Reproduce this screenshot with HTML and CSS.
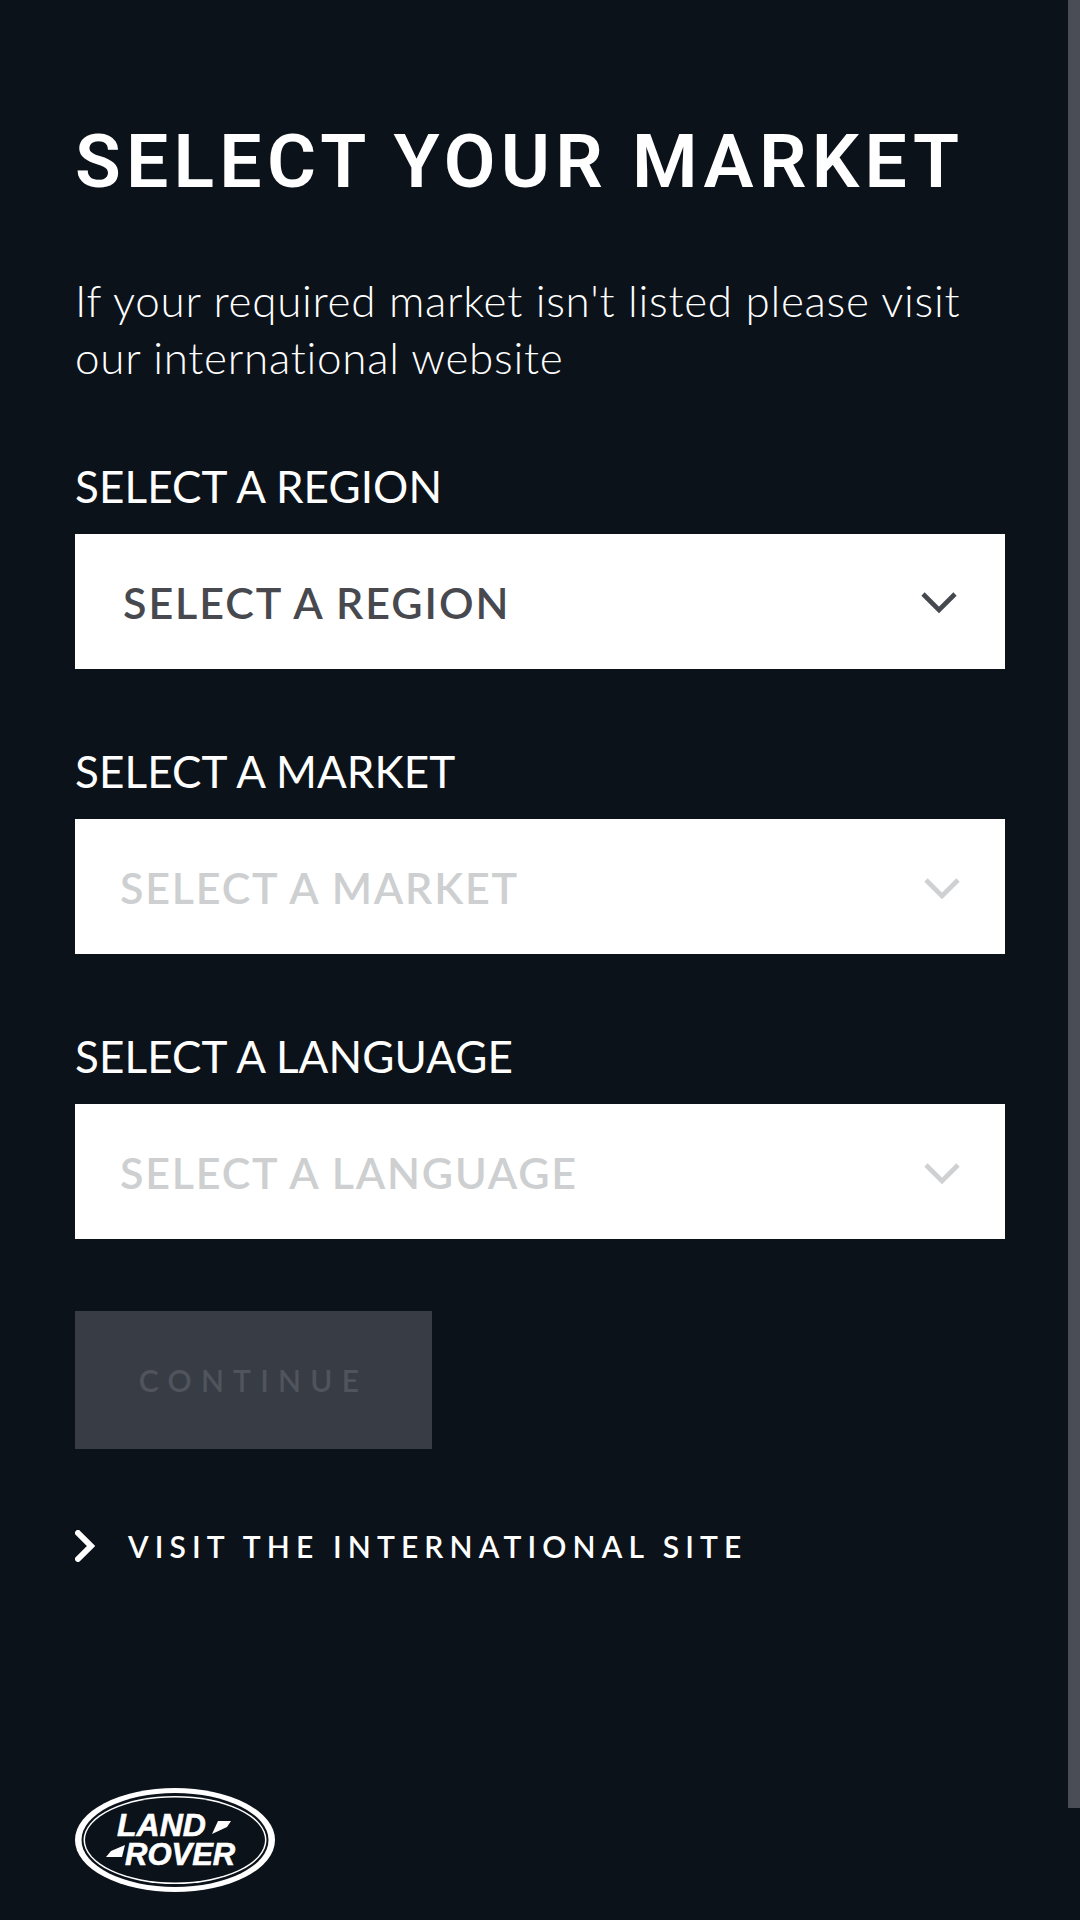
FILE: index.html
```html
<!DOCTYPE html>
<html lang="en">
<head>
<meta charset="utf-8">
<title>Select your market</title>
<link rel="stylesheet" href="styles.css">
</head>
<body>
<div class="page">
  <main class="content">
    <h1 class="title">SELECT YOUR MARKET</h1>
    <p class="intro">If your required market isn't listed please visit our international website</p>
    <div class="field">
      <label class="field-label">SELECT A REGION</label>
      <div class="select">
        <span class="select-text">SELECT A REGION</span>
        <svg class="chev" viewBox="0 0 36 22"><path d="M2 2 L18 18 L34 2" fill="none" stroke="#45484e" stroke-width="4.6"/></svg>
      </div>
    </div>
    <div class="field">
      <label class="field-label">SELECT A MARKET</label>
      <div class="select is-disabled">
        <span class="select-text">SELECT A MARKET</span>
        <svg class="chev" viewBox="0 0 36 22"><path d="M2 2 L18 18 L34 2" fill="none" stroke="#cfd0d2" stroke-width="4.6"/></svg>
      </div>
    </div>
    <div class="field">
      <label class="field-label">SELECT A LANGUAGE</label>
      <div class="select is-disabled">
        <span class="select-text">SELECT A LANGUAGE</span>
        <svg class="chev" viewBox="0 0 36 22"><path d="M2 2 L18 18 L34 2" fill="none" stroke="#cfd0d2" stroke-width="4.6"/></svg>
      </div>
    </div>
    <button class="continue" disabled>CONTINUE</button>
    <a class="visit" href="#">
      <svg class="visit-chev" viewBox="0 0 20 32"><path d="M3 3 L16 16 L3 29" fill="none" stroke="#fff" stroke-width="6" stroke-linecap="round"/></svg>
      <span>VISIT THE INTERNATIONAL SITE</span>
    </a>
    <svg class="logo" viewBox="0 0 200 104" role="img" aria-label="Land Rover">
      <ellipse cx="100" cy="52" rx="100" ry="52" fill="#fff"/>
      <ellipse cx="100" cy="52" rx="93.5" ry="47" fill="#0c121a"/>
      <ellipse cx="100" cy="52" rx="91.5" ry="44" fill="#fff"/>
      <ellipse cx="100" cy="52" rx="90" ry="42.5" fill="#0c121a"/>
      <text class="logo-text" x="42" y="48">LAND</text>
      <text class="logo-text logo-rover" x="50" y="77">ROVER</text>
      <polygon points="143,33 156,33 152,39 137,46" fill="#fff"/>
      <polygon points="50,57 36,63 31,69 47,69" fill="#fff"/>
    </svg>
  </main>
  <aside class="scrollbar"><div class="thumb"></div></aside>
</div>
</body>
</html>
```
FILE: styles.css
```css
* { box-sizing: border-box; }
html, body { margin: 0; padding: 0; height: 1920px; overflow: hidden; background: #0c121a; }
body { font-family: "Lato", "Liberation Sans", sans-serif; color: #fff; }
.page { display: flex; height: 1920px; }
.content { flex: 1; padding: 121px 63px 0 75px; display: flex; flex-direction: column; align-items: stretch; }
.title { margin: 0; font-family: "Roboto", "Liberation Sans", sans-serif; font-weight: 600; font-size: 75px; line-height: 80px; letter-spacing: 5.25px; white-space: nowrap; }
.intro { margin: 71px 0 0; font-size: 44px; font-weight: 300; line-height: 57px; letter-spacing: 0.72px; max-width: 900px; }
.field { display: flex; flex-direction: column; }
.intro + .field { margin-top: 75px; }
.field + .field { margin-top: 77px; }
.field-label { font-size: 44px; font-weight: 400; line-height: 50px; height: 50px; margin-bottom: 23px; letter-spacing: 0.1px; }
.select { height: 135px; background: #fff; display: flex; align-items: center; justify-content: space-between; padding: 2px 48px 0 48px; }
.select.is-disabled { padding: 2px 45px 0 45px; }
.select-text { font-size: 43px; font-weight: 600; color: #47494f; letter-spacing: 1.95px; }
.is-disabled .select-text { color: #cdcfd1; letter-spacing: 1.8px; }
.chev { width: 36px; height: 22px; display: block; }
.is-disabled .chev { margin-top: 2px; }
.continue { margin-top: 72px; width: 357px; height: 138px; border: 0; padding: 0; background: #383c45; color: #50545c; font-family: inherit; font-size: 30px; font-weight: 600; letter-spacing: 9.2px; }
.visit { margin-top: 79px; display: flex; align-items: center; gap: 33px; color: #fff; text-decoration: none; font-size: 30px; font-weight: 600; letter-spacing: 6.15px; line-height: 36px; }
.visit-chev { width: 20px; height: 32px; display: block; }
.logo { width: 200px; height: 104px; margin-top: 224px; display: block; }
.logo-text { font-family: "Liberation Sans", sans-serif; font-weight: 700; font-style: italic; font-size: 32px; fill: #fff; stroke: #fff; stroke-width: 0.6; }
.logo-rover { font-size: 31px; }
.scrollbar { width: 12px; flex: none; }
.thumb { height: 1808px; background: #4a4d55; }
```
